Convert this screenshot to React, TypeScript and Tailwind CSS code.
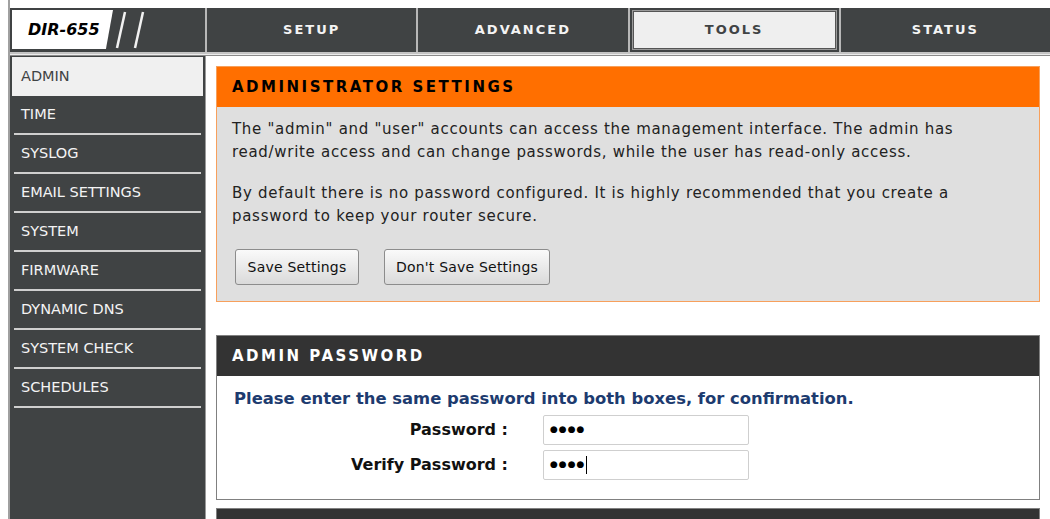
const tabs = ['SETUP', 'ADVANCED', 'TOOLS', 'STATUS']
const menu = ['TIME', 'SYSLOG', 'EMAIL SETTINGS', 'SYSTEM', 'FIRMWARE', 'DYNAMIC DNS', 'SYSTEM CHECK', 'SCHEDULES']

function Logo() {
  return (
    <div className="relative h-full w-[195px] pl-[2px] pt-[2px]">
      <div className="flex h-[39px] w-[101px] items-center bg-white pl-[16px] [clip-path:polygon(0_0,100%_0,93%_100%,0_100%)]">
        <span className="text-[16px] font-bold italic text-black">DIR-655</span>
      </div>
      {/* the two slashes next to the model name */}
      <svg className="absolute left-[103px] top-[2px]" width="34" height="40" viewBox="0 0 34 40">
        <line x1="12" y1="2" x2="4" y2="38" stroke="#f2f2f2" strokeWidth="2.5" />
        <line x1="30" y1="2" x2="22" y2="38" stroke="#f2f2f2" strokeWidth="2.5" />
      </svg>
    </div>
  )
}

function FakeInput({ caret }: { caret?: boolean }) {
  return (
    <div className="ml-[35px] flex h-[30px] w-[206px] items-center rounded-[2px] border border-[#cfcfcf] bg-white pl-[6px]">
      <span className="text-[9px] tracking-[1px] text-black">●●●●</span>
      {caret && <span className="ml-[1px] h-[18px] w-[1px] bg-black" />}
    </div>
  )
}

const btn = "h-[36px] rounded-[3px] border border-[#8c8c8c] bg-gradient-to-b from-[#fafafa] to-[#dadada] text-[14px] tracking-[0.2px] text-[#111]"

export default function App() {
  return (
    <div className="h-[519px] w-[1050px] overflow-hidden bg-white font-['DejaVu_Sans',sans-serif]">
      <div className="ml-[8px] flex h-full flex-col border-l-2 border-[#a0a0a0] pt-[8px]">
        <div className="flex h-[44px] bg-[#404344]">
          <Logo />
          <div className="grid flex-1 grid-cols-4">
            {tabs.map(t => (
              <div key={t} className="border-l-2 border-[#b8b8b8] p-[2px]">
                {t === 'TOOLS' ? (
                  <div className="flex h-full items-center justify-center border border-[#9a9a9a] bg-[#efefef] text-[13px] font-bold tracking-[2px] text-[#404344] shadow-[inset_0_0_0_1px_#555]">
                    {t}
                  </div>
                ) : (
                  <div className="flex h-full items-center justify-center text-[13px] font-bold tracking-[2px] text-[#f4f4f4]">
                    {t}
                  </div>
                )}
              </div>
            ))}
          </div>
        </div>
        <div className="h-[2px] bg-[#c4c4c4]" />
        <div className="h-[1px] bg-[#ececec]" />
        <div className="h-[1px] bg-[#8a8a8a]" />

        <div className="flex min-h-0 flex-1">
          <nav className="w-[196px] border-r border-[#9a9a9a] bg-[#404344] text-[14.5px]">
            <div className="mx-[2px] mt-[1px] flex h-[39px] items-center bg-[#f0f0f0] pl-[9px] text-[#404344]">ADMIN</div>
            {menu.map(m => (
              <div key={m} className="mx-[4px] flex h-[39px] items-center border-b-2 border-[#cfcfcf] pl-[7px] text-[#f4f4f4]">
                {m}
              </div>
            ))}
          </nav>

          <main className="flex-1 px-[10px] pt-[10px]">
            <section className="border border-[#f7a05c]">
              <div className="flex h-[40px] items-center bg-[#ff6f00] pl-[15px] text-[15px] font-bold tracking-[2.5px] text-black">
                ADMINISTRATOR SETTINGS
              </div>
              <div className="bg-[#dfdfdf] px-[15px] pb-[16px] pt-[11px] text-[15px] leading-[23px] tracking-[0.7px] text-[#222]">
                <p>
                  The "admin" and "user" accounts can access the management interface. The admin has<br />
                  read/write access and can change passwords, while the user has read-only access.
                </p>
                <p className="mt-[18px]">
                  By default there is no password configured. It is highly recommended that you create a<br />
                  password to keep your router secure.
                </p>
                <div className="mt-[21px] flex gap-[25px] pl-[3px]">
                  <button className={btn + " w-[124px]"}>Save Settings</button>
                  <button className={btn + " w-[166px]"}>Don't Save Settings</button>
                </div>
              </div>
            </section>

            <section className="mt-[33px] border border-[#808080]">
              <div className="flex h-[40px] items-center bg-[#333] pl-[15px] text-[15px] font-bold tracking-[2.5px] text-white">
                ADMIN PASSWORD
              </div>
              <div className="bg-white pb-[19px] pl-[17px] pt-[13px] text-[16px] font-bold">
                <p className="text-[16.4px] leading-[20px] text-[#1d3b6f]">Please enter the same password into both boxes, for confirmation.</p>
                <div className="mt-[6px] flex items-center">
                  <span className="w-[274px] text-right text-[#111]">Password :</span>
                  <FakeInput />
                </div>
                <div className="mt-[5px] flex items-center">
                  <span className="w-[274px] text-right text-[#111]">Verify Password :</span>
                  <FakeInput caret />
                </div>
              </div>
            </section>

            <section className="mt-[8px] h-[20px] border-x border-t border-[#808080] bg-[#333]" />
          </main>
        </div>
      </div>
    </div>
  )
}
